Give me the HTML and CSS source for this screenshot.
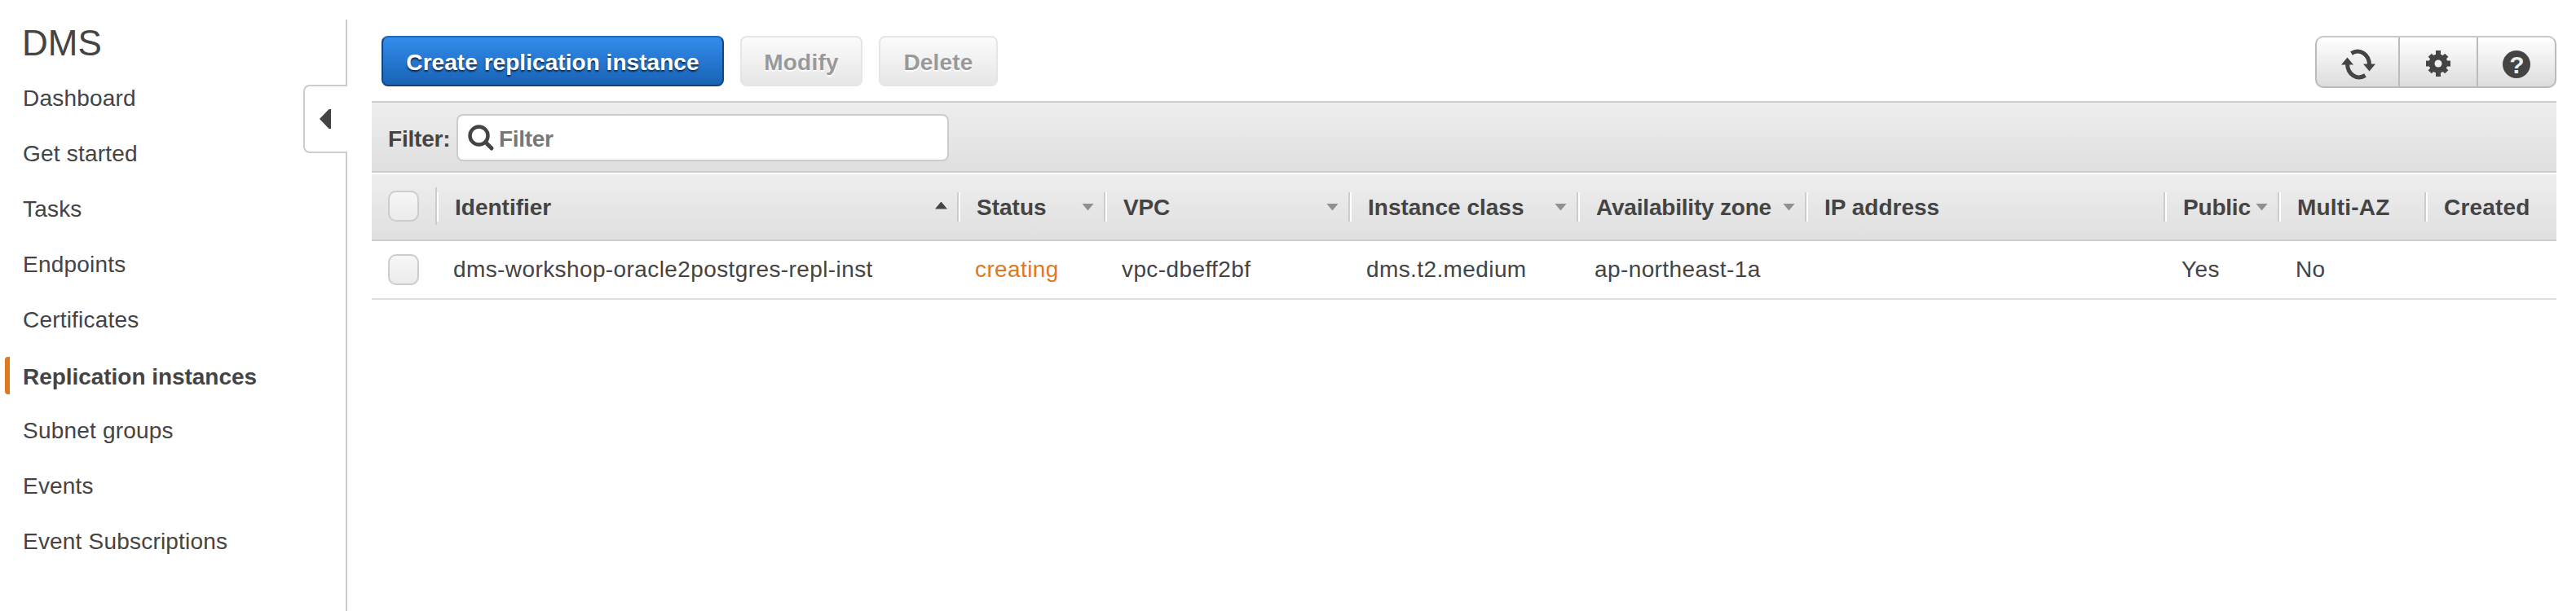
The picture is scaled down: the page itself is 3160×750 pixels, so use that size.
FILE: index.html
```html
<!DOCTYPE html>
<html lang="en">
<head>
<meta charset="utf-8">
<title>DMS - Replication instances</title>
<link rel="stylesheet" href="styles.css">
</head>
<body>
<div class="app">
  <nav class="sidebar">
    <h1 class="service">DMS</h1>
    <ul class="nav">
      <li class="nav-item">Dashboard</li>
      <li class="nav-item">Get started</li>
      <li class="nav-item">Tasks</li>
      <li class="nav-item">Endpoints</li>
      <li class="nav-item">Certificates</li>
      <li class="nav-item active">Replication instances</li>
      <li class="nav-item">Subnet groups</li>
      <li class="nav-item">Events</li>
      <li class="nav-item">Event Subscriptions</li>
    </ul>
    <div class="collapse"><svg width="14" height="24" viewBox="0 0 14 24"><path d="M0 12 11.5 0H14V24H11.5Z" fill="#444"/></svg></div>
  </nav>
  <main class="main">
    <div class="toolbar">
      <button class="btn primary">Create replication instance</button>
      <button class="btn modify" disabled>Modify</button>
      <button class="btn delete" disabled>Delete</button>
      <div class="tools">
        <span class="tool refresh"><svg width="42" height="38" viewBox="0 0 42 38"><g fill="none" stroke="#444" stroke-width="5"><path d="M12.5 5.500C23 -1 34.500 7 34.500 20"/><path d="M29.500 32.500C19 39 7.500 31 7.500 18"/></g><path d="M27 18.500H42L34.500 27.500ZM0 19.500H15L7.500 10.500Z" fill="#444"/></svg></span>
        <span class="tool gear"><svg width="30" height="32" viewBox="-15 -16 30 32"><g fill="#444"><circle r="11.500"/><path d="M-3-16H3V16H-3ZM-15-3.500H15V3.500H-15Z"/><path d="M-3-14.500H3V14.500H-3Z" transform="rotate(45)"/><path d="M-3-14.500H3V14.500H-3Z" transform="rotate(-45)"/></g><circle r="4.500" fill="#f0f0f0"/></svg></span>
        <span class="tool help"><svg width="34" height="34" viewBox="0 0 34 34"><circle cx="17" cy="17" r="17" fill="#444"/><text class="mark" x="17.500" y="28" text-anchor="middle">?</text></svg></span>
      </div>
    </div>
    <div class="filterbar">
      <label class="filter-label">Filter:</label>
      <div class="filter-input"><svg width="34" height="34" viewBox="0 0 34 34" fill="none" stroke="#444"><circle cx="14.500" cy="14.500" r="11" stroke-width="4.500"/><path d="M22.500 22.500 30 30" stroke-width="5" stroke-linecap="round"/></svg><span class="placeholder">Filter</span></div>
    </div>
    <div class="grid head">
      <div class="pick"><span class="box"></span></div>
      <div class="th first"><span>Identifier</span><i class="sort up"></i></div>
      <div class="th"><span>Status</span><i class="sort"></i></div>
      <div class="th tight"><span>VPC</span><i class="sort"></i></div>
      <div class="th"><span>Instance class</span><i class="sort"></i></div>
      <div class="th tight"><span>Availability zone</span><i class="sort"></i></div>
      <div class="th"><span>IP address</span></div>
      <div class="th tight"><span>Public</span><i class="sort"></i></div>
      <div class="th loose"><span>Multi-AZ</span></div>
      <div class="th loose"><span>Created</span></div>
    </div>
    <div class="grid row">
      <div class="pick"><span class="box"></span></div>
      <div class="td">dms-workshop-oracle2postgres-repl-inst</div>
      <div class="td status">creating</div>
      <div class="td">vpc-dbeff2bf</div>
      <div class="td">dms.t2.medium</div>
      <div class="td">ap-northeast-1a</div>
      <div class="td"></div>
      <div class="td">Yes</div>
      <div class="td">No</div>
      <div class="td"></div>
    </div>
  </main>
</div>
</body>
</html>
```
FILE: styles.css
```css
* { box-sizing: border-box; }
body { margin: 0; background: #fff; color: #444; font: 28px "Liberation Sans", Arial, sans-serif; }
.app { display: flex; width: 3160px; height: 750px; overflow: hidden; }
.sidebar { position: relative; width: 426px; margin-top: 24px; border-right: 2px solid #ccc; }
.service { margin: 0 0 4px 27px; font-size: 44px; font-weight: normal; line-height: 58px; }
.nav { margin: 0; padding: 0; list-style: none; }
.nav-item { height: 68px; padding-left: 28px; line-height: 69px; letter-spacing: 0.2px; white-space: nowrap; }
.nav-item.active { display: flex; padding-left: 6px; font-weight: bold; line-height: 73px; letter-spacing: -0.04px; }
.nav-item.active::before { content: ""; width: 6px; height: 46px; margin: 12px 16px 0 0; border-radius: 4px 0 0 4px; background: #e07820; }
.collapse { position: absolute; top: 80px; right: -2px; display: flex; align-items: center; width: 54px; height: 84px; padding-left: 18px; border: 2px solid #ccc; border-right: 0; border-radius: 8px 0 0 8px; background: #fff; }
.main { width: 2680px; margin-left: 30px; }
.toolbar { display: flex; height: 124px; padding: 44px 0 0 12px; }
.btn { height: 62px; margin: 0 20px 0 0; padding: 3px 0 0; border: 2px solid #e5e5e5; border-radius: 8px; background: linear-gradient(#fbfbfb, #e6e6e6); color: #999; font: bold 28px/55px "Liberation Sans", Arial, sans-serif; letter-spacing: 0.2px; text-shadow: 0 2px 2px #fff; }
.primary { width: 420px; border-color: #1d6ab9 #0f4580 #11417c; background: linear-gradient(#338ceb, #1863b5); color: #fff; letter-spacing: 0.05px; text-shadow: 0 2px 2px rgba(0, 0, 0, .65); }
.modify { width: 150px; }
.delete { width: 146px; }
.tools { display: flex; width: 296px; height: 64px; margin-left: auto; border: 2px solid #bbb; border-top-color: #c8c8c8; border-radius: 10px; background: linear-gradient(#fff, #dcdcdc); }
.tool { display: flex; justify-content: center; align-items: center; width: 96px; border-left: 2px solid #bbb; }
.tool.refresh { width: 100px; padding: 6px 0 0 1px; border-left: 0; }
.tool.gear { padding-top: 4px; }
.tool.help { padding-top: 6px; }
.mark { fill: #eee; font: bold 30px "Liberation Sans", Arial, sans-serif; }
.filterbar { display: flex; height: 88px; padding: 14px 0 0 20px; border: solid #ccc; border-width: 2px 0; background: linear-gradient(#eee, #dfdfdf); }
.filter-label { width: 84px; font-weight: bold; line-height: 61px; letter-spacing: -0.2px; }
.filter-input { display: flex; align-items: center; width: 604px; height: 58px; padding-left: 11px; border: 2px solid #ccc; border-radius: 8px; background: #fff; }
.placeholder { margin-left: 5px; padding-top: 3px; color: #777; font-weight: bold; line-height: 51px; letter-spacing: -0.3px; }
.grid { display: grid; grid-template-columns: 78px 640px 180px 300px 280px 280px 440px 140px 180px 162px; }
.head { height: 82px; margin-top: 2px; border-bottom: 2px solid #ccc; background: linear-gradient(#eee, #dfdfdf); font-weight: bold; }
.pick { display: flex; align-items: center; padding-left: 20px; }
.box { width: 38px; height: 38px; border: 2px solid #ccc; border-radius: 10px; background: linear-gradient(#f6f6f6, #ebebeb); }
.head .box { margin-bottom: 2px; }
.th { display: flex; align-items: center; padding-right: 12px; line-height: 78px; white-space: nowrap; }
.th.tight { letter-spacing: -0.2px; }
.th.loose { letter-spacing: 0.2px; }
.th span { padding-top: 2px; }
.th::before { content: ""; width: 4px; height: 36px; margin-right: 20px; background: linear-gradient(90deg, #ccc 50%, #fff 50%); }
.first::before { height: 46px; margin-bottom: 2px; background: linear-gradient(#ccc, #ccc) 0 0 / 2px 46px no-repeat, linear-gradient(#fff, #fff) 2px 6px / 2px 36px no-repeat; }
.sort { width: 15px; height: 9px; margin-left: auto; background: #909090; clip-path: polygon(0 0, 100% 0, 50% 100%); }
.sort.up { margin-bottom: 4px; background: #444; clip-path: polygon(0 100%, 100% 100%, 50% 0); }
.row { height: 72px; border-bottom: 2px solid #ddd; }
.td { padding-left: 22px; line-height: 69px; letter-spacing: 0.4px; white-space: nowrap; }
.status { color: #e07820; }
```
